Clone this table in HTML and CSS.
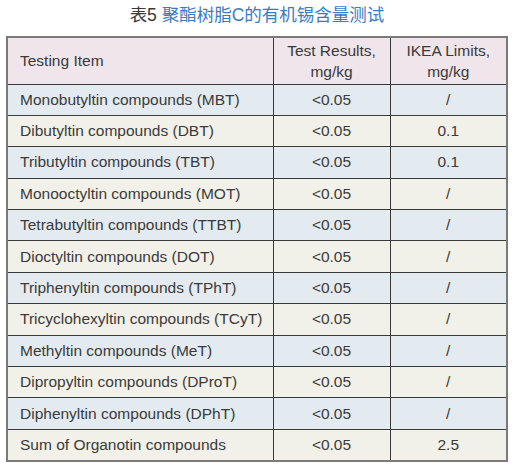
FILE: index.html
```html
<!DOCTYPE html>
<html lang="zh">
<head>
  <meta charset="UTF-8" />
  <title>表5 聚酯树脂C的有机锡含量测试</title>
  <link rel="stylesheet" href="styles.css">
</head>
<body>
  <div class="wrap">
    <h1 class="caption"><span class="num">表5</span> <span class="name">聚酯树脂C的有机锡含量测试</span></h1>
    <table class="results">
      <thead>
        <tr>
          <th class="item">Testing Item</th>
          <th>Test Results,<br>mg/kg</th>
          <th>IKEA Limits,<br>mg/kg</th>
        </tr>
      </thead>
      <tbody>
        <tr class="blue"><td class="item">Monobutyltin compounds (MBT)</td><td>&lt;0.05</td><td>/</td></tr>
        <tr class="beige"><td class="item">Dibutyltin compounds (DBT)</td><td>&lt;0.05</td><td>0.1</td></tr>
        <tr class="blue"><td class="item">Tributyltin compounds (TBT)</td><td>&lt;0.05</td><td>0.1</td></tr>
        <tr class="beige"><td class="item">Monooctyltin compounds (MOT)</td><td>&lt;0.05</td><td>/</td></tr>
        <tr class="blue"><td class="item">Tetrabutyltin compounds (TTBT)</td><td>&lt;0.05</td><td>/</td></tr>
        <tr class="beige"><td class="item">Dioctyltin compounds (DOT)</td><td>&lt;0.05</td><td>/</td></tr>
        <tr class="blue"><td class="item">Triphenyltin compounds (TPhT)</td><td>&lt;0.05</td><td>/</td></tr>
        <tr class="beige"><td class="item">Tricyclohexyltin compounds (TCyT)</td><td>&lt;0.05</td><td>/</td></tr>
        <tr class="blue"><td class="item">Methyltin compounds (MeT)</td><td>&lt;0.05</td><td>/</td></tr>
        <tr class="beige"><td class="item">Dipropyltin compounds (DProT)</td><td>&lt;0.05</td><td>/</td></tr>
        <tr class="blue"><td class="item">Diphenyltin compounds (DPhT)</td><td>&lt;0.05</td><td>/</td></tr>
        <tr class="beige"><td class="item">Sum of Organotin compounds</td><td>&lt;0.05</td><td>2.5</td></tr>
      </tbody>
    </table>
  </div>
</body>
</html>
```

FILE: styles.css
```css
* {
  margin: 0;
  padding: 0;
  box-sizing: border-box;
}

body {
  font-family: "Liberation Sans", "Noto Sans CJK SC", Arial, sans-serif;
  color: #333;
  background: #fff;
}

.wrap {
  width: 502px;
  margin-left: 6px;
  padding-top: 4px;
}

.caption {
  font-size: 17.5px;
  font-weight: normal;
  text-align: center;
  line-height: 22px;
  height: 32px;
}

.caption .num {
  color: #3a3a3a;
}

.caption .name {
  color: #3a7cc3;
}

.results {
  width: 502px;
  border-collapse: collapse;
  border: 2px solid #7a7a7a;
  font-size: 15.5px;
  line-height: 18px;
}

.results th,
.results td {
  border: 1px solid #3a3a3a;
  text-align: center;
  font-weight: normal;
  color: #3a3a3a;
}

.results th {
  height: 47px;
  background: #efe5ea;
  line-height: 21px;
}

.results td {
  height: 31.4px;
}

.results .item {
  text-align: left;
  padding-left: 12px;
  width: 266px;
}

.results th:nth-child(2),
.results td:nth-child(2) {
  width: 117px;
}

.blue {
  background: #e3ebf1;
}

.beige {
  background: #f2f1e9;
}
```
